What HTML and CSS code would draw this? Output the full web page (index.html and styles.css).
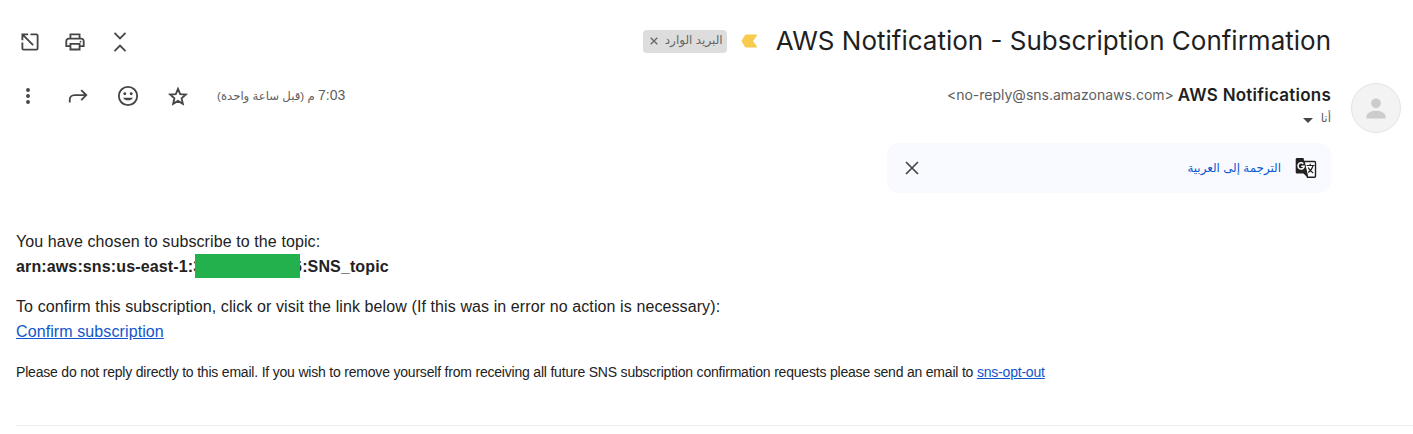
FILE: index.html
```html
<!DOCTYPE html>
<html lang="ar">
<head>
<meta charset="utf-8">
<title>AWS Notification - Subscription Confirmation</title>
<link rel="stylesheet" href="styles.css">
</head>
<body>
<header class="subject-bar">
  <div class="tools">
    <svg class="icon" viewBox="0 0 24 24"><path d="M10 3.700H3.700V10M12.500 3.700H19a1.300 1.300 0 0 1 1.300 1.300v14a1.300 1.300 0 0 1-1.300 1.300H5A1.300 1.300 0 0 1 3.700 19v-6.500M4 4l11.400 11.400"/></svg>
    <svg class="icon" viewBox="0 0 24 24"><path d="M7 8V3.700h10V8M7 16.500H2.500V11a2.700 2.700 0 0 1 2.700-2.700h13.600a2.700 2.700 0 0 1 2.700 2.700v5.500H17M7 14h10v6.200H7z"/><circle class="solid" cx="18" cy="11.600" r="1"/></svg>
    <svg class="icon" viewBox="0 0 24 24"><path d="M6 2l6 6 6-6M6 22l6-6 6 6"/></svg>
  </div>
  <div class="subject">
    <span class="label"><svg class="label-close" viewBox="0 0 8 8"><path d="M.7.7l6.600 6.600M7.300.7L.7 7.300"/></svg><span dir="rtl">البريد الوارد</span></span>
    <svg class="marker" viewBox="0 0 17 14"><path d="M5.500.5H15q1.800 0 .8 1.200L12 7l3.800 5.300q1 1.200-.8 1.200H5.500q-1 0-1.600-.8L.4 7l3.500-5.700Q4.500.5 5.500.5z"/></svg>
    <h1 class="title">AWS Notification - Subscription Confirmation</h1>
  </div>
</header>

<section class="sender-bar">
  <div class="actions">
    <svg class="icon" viewBox="0 0 24 24"><g class="solid"><circle cx="12" cy="5.500" r="2.100"/><circle cx="12" cy="12" r="2.100"/><circle cx="12" cy="18.500" r="2.100"/></g></svg>
    <svg class="icon" viewBox="0 0 24 24"><path d="M3 19v-3a5 5 0 0 1 5-5h12M15.500 5.500L21 11l-5.500 5.500"/></svg>
    <svg class="icon" viewBox="0 0 24 24"><circle cx="12" cy="12" r="10"/><g class="solid"><circle cx="8.500" cy="9.500" r="1.600"/><circle cx="15.500" cy="9.500" r="1.600"/><path d="M6.700 13.800h10.600a5.700 4.600 0 0 1-10.600 0z"/></g></svg>
    <svg class="icon" viewBox="0 0 24 24"><path d="M12 4.200l2.400 5.700 6.200.5-4.700 4.100 1.400 6L12 17.300l-5.300 3.200 1.400-6-4.700-4.100 6.200-.5z"/></svg>
    <time class="time" dir="rtl"><span class="clock">7:03</span> م (قبل ساعة واحدة)</time>
  </div>
  <div class="sender">
    <div class="from"><span class="address">&lt;no-reply@sns.amazonaws.com&gt;</span><strong class="name">AWS Notifications</strong></div>
    <div class="to"><svg class="caret" viewBox="0 0 10 5"><path d="M0 0h10L5 5z"/></svg><span dir="rtl">أنا</span></div>
  </div>
  <svg class="avatar" viewBox="0 0 50 50"><circle class="avatar-disc" cx="25" cy="25" r="24.500"/><circle cx="25" cy="20.300" r="4.900"/><path d="M15.500 35.500v-2c0-4 5.500-5.800 9.500-5.800s9.500 1.800 9.500 5.800v2z"/></svg>
</section>

<aside class="translate">
  <svg class="close" viewBox="0 0 14 14"><path d="M1 1l12 12M13 1L1 13"/></svg>
  <a class="translate-link" dir="rtl">الترجمة إلى العربية</a>
  <svg class="translate-icon" viewBox="0 0 22 22"><path class="page" d="M9 4.500h10.500a1 1 0 0 1 1 1v13.700a1 1 0 0 1-1 1h-7z"/><path class="ink" d="M2 1h6.500l3.600 15.500H2a1.300 1.300 0 0 1-1.300-1.300V2.300A1.300 1.300 0 0 1 2 1zM8.500 16.500h4v4z"/><path class="glyph" d="M11.500 8.500h8M15.200 6.700v1.800M18 8.500c-.7 3-2.500 5.500-5 7M13.200 10.500c1.200 2.600 2.800 4.300 5 5.500"/><path class="letter" d="M8.300 6.700a3.100 3.100 0 1 0 .9 2.500H6.300"/></svg>
</aside>

<main class="message" dir="ltr" lang="en">
  <p class="para">You have chosen to subscribe to the topic:<br>
  <b class="arn">arn:aws:sns:us-east-1:<span class="account"><span>3</span><span>6</span></span>:SNS_topic</b></p>
  <p class="para">To confirm this subscription, click or visit the link below (If this was in error no action is necessary):<br>
  <a class="link">Confirm subscription</a></p>
  <p class="note">Please do not reply directly to this email. If you wish to remove yourself from receiving all future SNS subscription confirmation requests please send an email to <a class="link">sns-opt-out</a></p>
</main>
</body>
</html>
```
FILE: styles.css
```css
* { box-sizing: border-box; }
body {
  margin: 0;
  height: 434px;
  overflow: hidden;
  background: #fff;
  color: #222;
  font-family: "Liberation Sans", "DejaVu Sans", sans-serif;
}
svg { display: block; flex: none; }
.icon {
  width: 22px;
  height: 22px;
  fill: none;
  stroke: #444746;
  stroke-width: 2;
}
.icon .solid { fill: #444746; stroke: none; }

.subject-bar {
  display: flex;
  justify-content: space-between;
  align-items: center;
  height: 64px;
  padding: 18px 82px 0 18px;
}
.tools { display: flex; gap: 23px; padding-left: 0.500px; padding-top: 1px; }
.subject { display: flex; align-items: center; }
.label {
  display: flex;
  align-items: center;
  gap: 7px;
  width: 84px;
  height: 23px;
  padding: 0 5px 3px 7px;
  border-radius: 4px;
  background: #ddd;
  color: #666;
  font-size: 12px;
  white-space: nowrap;
}
.label-close { width: 8px; height: 8px; margin-top: 3px; fill: none; stroke: #666; stroke-width: 1.3; }
.marker { width: 17px; height: 14px; margin: 0 18px 0 14px; fill: #f7cb4d; }
.title {
  margin: 0;
  color: #1f1f1f;
  font: 400 26px/36px Inter, sans-serif;
  white-space: nowrap;
}

.sender-bar { display: flex; height: 79px; padding: 0 12px 0 17px; }
.actions { display: flex; gap: 28px; padding-top: 21px; }
.time { color: #5e5e5e; font-size: 11.7px; line-height: 20px; white-space: nowrap; }
.clock { font-size: 14px; }
.sender { margin-left: auto; padding-top: 19px; }
.from { display: flex; gap: 4px; line-height: 24px; white-space: nowrap; }
.address { color: #5e5e5e; font-family: Inter, sans-serif; font-size: 14px; }
.name { color: #1f1f1f; font: 600 17px/24px Inter, sans-serif; letter-spacing: 0.240px; }
.to {
  display: flex;
  justify-content: flex-end;
  align-items: center;
  gap: 8px;
  height: 22px;
  color: #5e5e5e;
  font-size: 12px;
}
.caret { width: 10px; height: 5px; margin-top: 4px; fill: #444746; }
.avatar { width: 50px; height: 50px; margin: 19px 0 0 20px; fill: #ccc; }
.avatar-disc { fill: #f3f3f3; stroke: #e2e2e2; }

.translate {
  display: flex;
  align-items: center;
  width: 444px;
  height: 50px;
  margin-left: 887px;
  padding: 0 14px 0 18px;
  border-radius: 12px;
  background: #f8faff;
}
.close { width: 14px; height: 14px; fill: none; stroke: #444746; stroke-width: 1.7; }
.translate-link { margin-left: auto; color: #0b57d0; font-size: 11.9px; white-space: nowrap; }
.translate-icon { width: 22px; height: 22px; margin-left: 14px; fill: none; }
.page { fill: #fff; stroke: #222; stroke-width: 1.4; }
.ink { fill: #222; }
.glyph { stroke: #222; stroke-width: 1.2; }
.letter { stroke: #fff; stroke-width: 1.5; }

.message {
  height: 233px;
  margin-left: 16px;
  padding-top: 36px;
  border-bottom: 1px solid #ececec;
  white-space: nowrap;
}
.para { margin: 0 0 15px; font-size: 16px; line-height: 25px; letter-spacing: 0.100px; }
.arn { letter-spacing: 0.130px; }
.account {
  position: relative;
  display: inline-flex;
  justify-content: space-between;
  width: 109px;
}
.account::after {
  content: "";
  position: absolute;
  left: 2px;
  top: 0;
  width: 105px;
  height: 24px;
  background: #22b14c;
}
.link { color: #1155cc; text-decoration: underline; }
.note { margin: 0; padding-top: 1px; font-size: 14px; line-height: 25px; letter-spacing: -0.200px; }
```
